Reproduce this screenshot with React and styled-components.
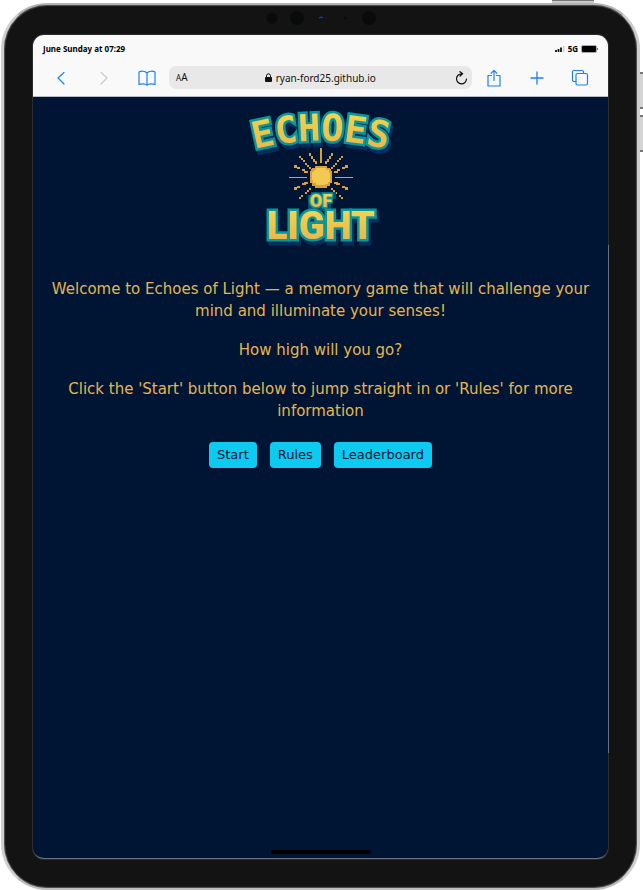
import React from "react";
import styled, { createGlobalStyle } from "styled-components";

const GlobalStyle = createGlobalStyle`
  *, *::before, *::after { box-sizing: border-box; }
  body { margin: 0; background: #fff; }
`;

const Page = styled.div`
  position: relative;
  display: flex;
  min-height: 100vh;
  padding: 3px 3px 0 1px;
  overflow: hidden;
  font-family: "Noto Sans", "Open Sans", sans-serif;
`;

const PowerButton = styled.span`
  position: absolute;
  top: 0;
  right: 49px;
  width: 42px;
  height: 4px;
  border-top: 1px solid #777;
  background: #c9c9c9;
`;

const VolumeButton = styled.span`
  position: absolute;
  top: ${(p) => p.$top}px;
  right: 0;
  width: 3px;
  height: 37px;
  border: solid #777;
  border-width: 2px 0;
  background: #d5d5d5;
`;

const Device = styled.div`
  position: relative;
  flex: 1;
  display: flex;
  flex-direction: column;
  padding: 0 29px 29px;
  border: 3px solid #cfcdcf;
  border-top: 2px solid #b4b4b4;
  border-bottom: 2px solid #bdbdbd;
  border-radius: 46px;
  background: #131313;
  box-shadow: inset 0 0 1px 1px #555;
`;

const Bezel = styled.div`
  display: flex;
  flex: none;
  align-items: center;
  justify-content: center;
  height: 30px;
  padding-bottom: 4px;
`;

const Screen = styled.div`
  position: relative;
  flex: 1;
  display: flex;
  flex-direction: column;
  overflow: hidden;
  border-radius: 11px;
  background: #001533;
  border-bottom: 1px solid #66707f;
  box-shadow: 0 0 0 1px #2b2c2d;
`;

const EdgeHighlight = styled.span`
  position: absolute;
  top: 240px;
  bottom: 135px;
  right: 28px;
  width: 1px;
  background: #66707f;
`;

const BrowserBar = styled.header`
  padding-bottom: 7px;
  border-bottom: 1px solid #b9bcc2;
  background: #f9f9f9;
`;

const StatusRow = styled.div`
  display: flex;
  align-items: center;
  justify-content: space-between;
  height: 31px;
  padding: 0 10px;
  padding-bottom: 4px;
  color: #000;
  font-size: 8px;
  font-weight: 700;
  line-height: 12px;
`;

const StatusGroup = styled.div`
  display: flex;
  align-items: center;
  gap: 3px;
`;

const Toolbar = styled.nav`
  display: flex;
  align-items: center;
  padding: 0 7px 0 6px;
`;

const IconButton = styled.button`
  display: flex;
  align-items: center;
  justify-content: center;
  width: ${(p) => (p.$compact ? 16 : 43)}px;
  height: 23px;
  padding: 0;
  border: 0;
  background: none;
  color: ${(p) => p.$color || "#1683f7"};
`;

const AddressBar = styled.div`
  flex: 1;
  display: flex;
  align-items: center;
  justify-content: space-between;
  height: 23px;
  margin-left: 1px;
  padding: 0 3px 0 7px;
  border-radius: 7px;
  background: #e8e8e8;
`;

const TextSizeButton = styled.button`
  padding: 0;
  border: 0;
  background: none;
  color: #111;
  font: 10px/16px "Noto Sans", sans-serif;

  small { font-size: 8px; }
`;

const Address = styled.a`
  display: flex;
  align-items: center;
  gap: 4px;
  color: #111;
  font-size: 10px;
  line-height: 16px;
  text-decoration: none;
`;

const Game = styled.main`
  flex: 1;
  display: flex;
  flex-direction: column;
  align-items: center;
  padding: 0 8px 40px;
  color: #e3b552;
  font-family: "DejaVu Sans", sans-serif;
  text-align: center;
`;

const Logo = styled.svg`
  display: block;
  flex: none;
  width: 160px;
  height: 160px;
  margin-bottom: 21px;
  overflow: visible;
`;

const LogoWord = styled.text`
  fill: url(#gold);
  stroke: #0b9699;
  stroke-width: ${(p) => (p.$small ? 3 : 5)}px;
  paint-order: stroke;
  font-family: ${(p) => (p.$mono ? '"DejaVu Sans Mono", monospace' : "Roboto, sans-serif")};
  font-size: ${(p) => p.$size}px;
  font-weight: 900;
  text-anchor: middle;
  filter: ${(p) => (p.$small ? "none" : "drop-shadow(2px 4px 0 #002f5d)")};
`;

const Intro = styled.p`
  margin: 0 0 17px;
  font-size: 15px;
  line-height: 22px;
`;

const Actions = styled.div`
  display: flex;
  flex-wrap: wrap;
  justify-content: center;
  gap: 13px;
  margin-top: 3px;
`;

const ActionButton = styled.button`
  height: 26px;
  padding: 0 8px;
  border: 0;
  border-radius: 4px;
  background: #0dcaf0;
  color: #001533;
  font: 13px/18px "DejaVu Sans", sans-serif;
`;

const HomeIndicator = styled.span`
  position: absolute;
  bottom: 4px;
  left: 50%;
  width: 100px;
  height: 4px;
  margin-left: -50px;
  border-radius: 2px;
  background: #000;
`;

const Icon = ({ size = 18, width = 1, children }) => (
  <svg width={size} height={size} viewBox={`0 0 ${size} ${size}`} fill="none"
    stroke="currentColor" strokeWidth={width} strokeLinecap="round" strokeLinejoin="round" aria-hidden="true">
    {children}
  </svg>
);

const Cameras = () => (
  <svg width="112" height="16" viewBox="0 0 112 16" aria-hidden="true">
    <circle cx="7" cy="8" r="5.5" fill="#090b0b" />
    <circle cx="32" cy="8" r="7" fill="#090b0b" />
    <circle cx="56" cy="8" r="3" fill="#0c1525" />
    <path d="M54 8q2-2 4 0" stroke="#17509a" fill="none" />
    <circle cx="80" cy="8" r="1.5" fill="#090b0b" />
    <circle cx="104" cy="8" r="7" fill="#090b0b" />
  </svg>
);

/* Pixels of the left-hand rays; the right side mirrors them. */
const rayPixels = [
  [58, 59, 2, 2], [60, 61, 2, 2], [62, 63, 2, 2], [64, 66, 2, 2], [66, 68, 2, 2], [68, 70, 2, 2], [70, 72, 2, 2],
  [68, 56, 2, 3], [70, 59, 2, 3], [72, 62, 2, 3], [74, 64, 2, 3],
  [53, 68, 3, 3], [56, 70, 3, 2], [61, 72, 3, 2], [63, 74, 4, 2],
  [48, 80, 18, 1],
  [63, 85, 4, 2], [61, 86, 4, 2], [56, 89, 3, 2], [53, 90, 3, 3],
  [68, 91, 2, 2], [66, 93, 2, 2], [64, 95, 2, 2], [60, 98, 2, 2], [58, 100, 2, 2],
];

const Rays = () => rayPixels.map(([x, y, w, h]) => (
  <rect key={`${x}-${y}`} x={x} y={y} width={w} height={h} />
));

const EchoesLogo = () => (
  <Logo viewBox="0 0 160 160" role="img" aria-label="Echoes of Light">
    <defs>
      <linearGradient id="gold" x1="0" y1="0" x2="0" y2="1">
        <stop offset="0" stopColor="#f2db51" />
        <stop offset="1" stopColor="#e9ae4b" />
      </linearGradient>
      <path id="arc" d="M4 55Q80 32 156 55" />
    </defs>
    <g fill="#dda039" shapeRendering="crispEdges">
      <rect x="79" y="51" width="2" height="15" />
      <Rays />
      <g transform="translate(160 0) scale(-1 1)"><Rays /></g>
      <path d="M74 69h12v2h3v3h2v12h-2v3h-3v2H74v-2h-3v-3h-2V74h2v-3h3z" />
      <path d="M75 71h10v2h3v3h1v9h-2v2h-3v1H75v-2h-3v-3h-1v-8h2v-2h2z" fill="#f3c952" />
    </g>
    <path d="M70 95h25v7h-5v12H67v-16h3z" fill="#04506f" />
    <LogoWord $mono $size={37}><textPath href="#arc" startOffset="50%">ECHOES</textPath></LogoWord>
    <LogoWord $small $size={18} x="80" y="110">OF</LogoWord>
    <LogoWord $size={38} x="80" y="142">LIGHT</LogoWord>
  </Logo>
);

export default function App() {
  return (
    <>
      <GlobalStyle />
      <Page>
        <PowerButton />
        <VolumeButton $top={72} />
        <VolumeButton $top={115} />
        <Device>
          <Bezel><Cameras /></Bezel>
          <Screen>
            <BrowserBar>
              <StatusRow>
                <span>June Sunday at 07:29</span>
                <StatusGroup>
                  <svg width="10" height="8" viewBox="0 0 10 8" aria-hidden="true">
                    <path d="M1 5v2M3.5 4v3M6 2.5V7" stroke="#000" strokeWidth="1.7" />
                    <path d="M8.7 1v6" stroke="#ccc" strokeWidth="1.5" />
                  </svg>
                  <span>5G</span>
                  <svg width="17" height="8" viewBox="0 0 17 8" aria-hidden="true">
                    <rect x=".5" y=".5" width="15" height="7" rx="1.5" fill="#000" stroke="#aaa" />
                    <path d="M16.5 3v2" stroke="#777" />
                  </svg>
                </StatusGroup>
              </StatusRow>
              <Toolbar>
                <IconButton aria-label="Back"><Icon width={1.2}><path d="M12 3.5 6 9l6 6" /></Icon></IconButton>
                <IconButton aria-label="Forward" $color="#c9cacc"><Icon width={1.2}><path d="m6 3.5 6 5.5-6 6" /></Icon></IconButton>
                <IconButton aria-label="Bookmarks">
                  <Icon width={1.2}><path d="M9 4C7 1.800 3 1.800 1 3v12.500c2-1 6-1 8 .5 2-1.500 6-1.500 8-.5V3c-2-1.200-6-1.200-8 1v12" /></Icon>
                </IconButton>
                <AddressBar>
                  <TextSizeButton aria-label="Text size"><small>A</small>A</TextSizeButton>
                  <Address href="https://ryan-ford25.github.io">
                    <svg width="7" height="10" viewBox="0 0 7 10" aria-hidden="true">
                      <path d="M1.500 5V2.800a2 2 0 0 1 4 0V5" fill="none" stroke="#111" />
                      <rect y="4" width="7" height="5" rx="1" fill="#111" />
                    </svg>
                    ryan-ford25.github.io
                  </Address>
                  <IconButton $compact $color="#111" aria-label="Reload">
                    <Icon size={14} width={1.2}><path d="M7.500 2.800A5 5 0 1 0 12.500 8M6 .7l2.600 2.100L6 5" /></Icon>
                  </IconButton>
                </AddressBar>
                <IconButton aria-label="Share">
                  <Icon width={1.2}><path d="M6.500 6.500H3V17h12V6.500h-3.500M9 11.500V1.500M6 4.300l3-3 3 3" /></Icon>
                </IconButton>
                <IconButton aria-label="New tab"><Icon width={1.3}><path d="M9 3v12M3 9h12" /></Icon></IconButton>
                <IconButton aria-label="Tabs">
                  <Icon width={1.2}>
                    <path d="M5 12.500H3a1.500 1.500 0 0 1-1.500-1.500V3A1.500 1.500 0 0 1 3 1.500h8A1.500 1.500 0 0 1 12.500 3v1.500" />
                    <rect x="5" y="4.500" width="11.500" height="11.500" rx="1.500" />
                  </Icon>
                </IconButton>
              </Toolbar>
            </BrowserBar>
            <Game>
              <EchoesLogo />
              <Intro>Welcome to Echoes of Light — a memory game that will challenge your mind and illuminate your senses!</Intro>
              <Intro>How high will you go?</Intro>
              <Intro>Click the 'Start' button below to jump straight in or 'Rules' for more information</Intro>
              <Actions>
                <ActionButton>Start</ActionButton>
                <ActionButton>Rules</ActionButton>
                <ActionButton>Leaderboard</ActionButton>
              </Actions>
            </Game>
            <HomeIndicator />
          </Screen>
          <EdgeHighlight />
        </Device>
      </Page>
    </>
  );
}
